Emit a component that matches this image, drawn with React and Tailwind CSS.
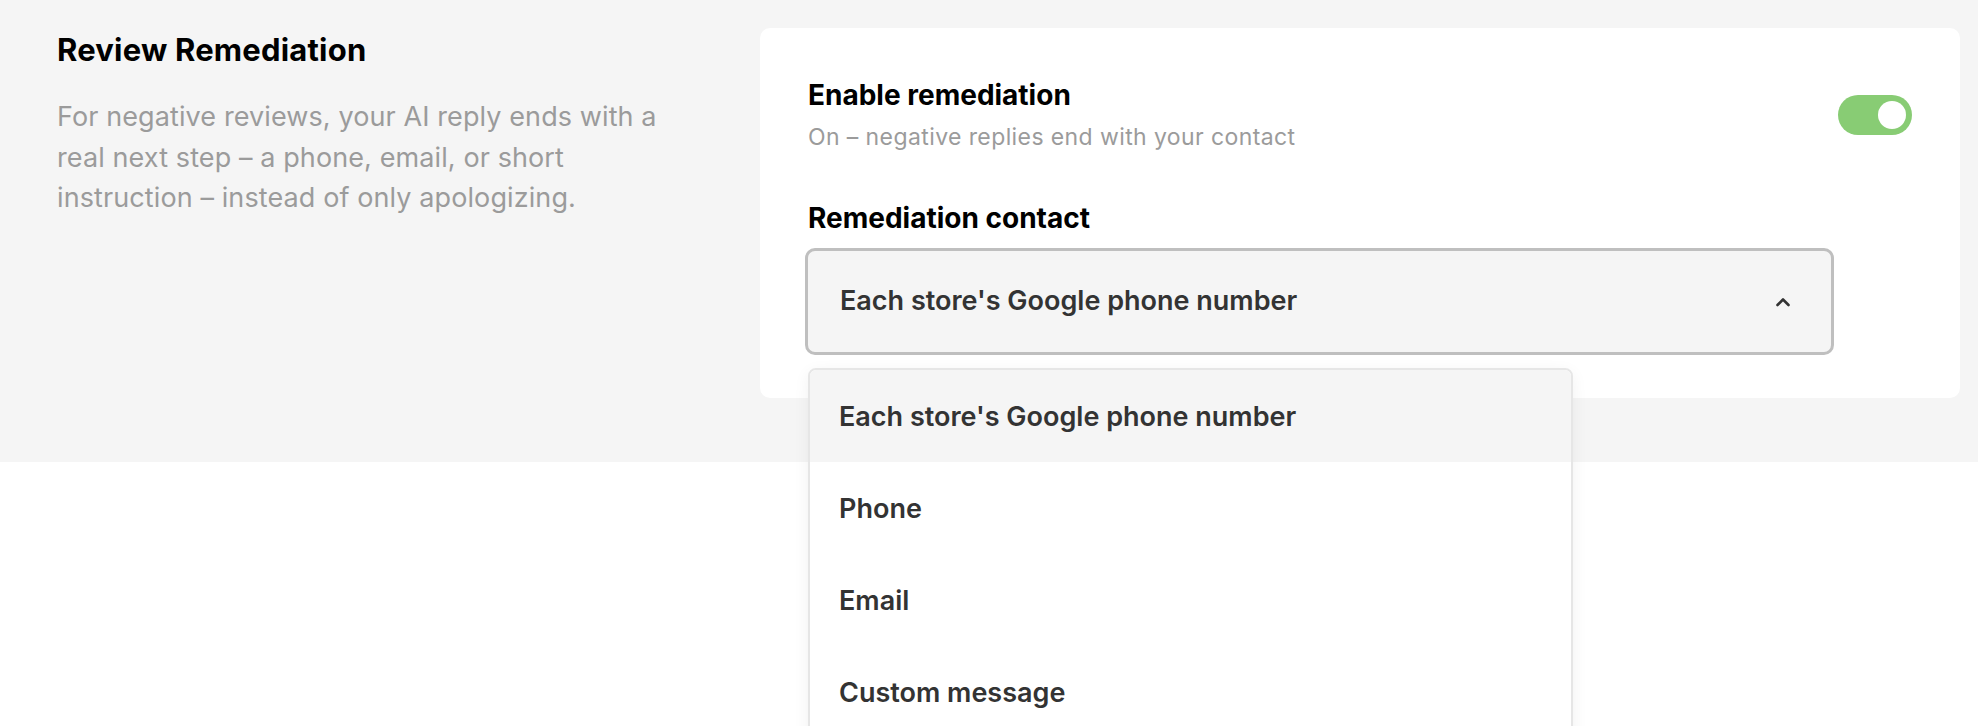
import { useState } from 'react';

const options = ["Each store's Google phone number", 'Phone', 'Email', 'Custom message'];

function Toggle({ on, onChange }) {
  return (
    <button
      type="button"
      onClick={() => onChange(!on)}
      className={`flex h-[40px] w-[74px] shrink-0 items-center rounded-full px-[6px] ${
        on ? 'justify-end bg-[#88cc74]' : 'justify-start bg-[#d4d4d4]'
      }`}
    >
      <span className="block h-[28px] w-[28px] rounded-full bg-white" />
    </button>
  );
}

function ChevronUp() {
  return (
    <svg width="16" height="10" viewBox="0 0 16 10" fill="none">
      <path d="M2.5 8L8 2.5L13.5 8" stroke="#333" strokeWidth="2.6" strokeLinecap="round" strokeLinejoin="round" />
    </svg>
  );
}

export default function App() {
  const [enabled, setEnabled] = useState(true);
  const [value, setValue] = useState(options[0]);
  const [open, setOpen] = useState(true);

  return (
    <div className="min-h-screen bg-white font-['Inter',sans-serif]">
      <section className="flex bg-[#f5f5f5] pb-[64px] pl-[57px] pr-[18px] pt-[28px]">
        <div className="w-[703px] shrink-0 pr-[83px]">
          <h2 className="text-[31px] font-bold leading-[44px] tracking-[0.2px] text-black">Review Remediation</h2>
          <p className="mt-[25px] text-[27px] leading-[40.5px] tracking-[0.1px] text-[#9b9b9b]">
            For negative reviews, your AI reply ends with a real next step – a phone, email, or short
            instruction – instead of only apologizing.
          </p>
        </div>

        <div className="flex-1 rounded-[10px] bg-white pb-[43px] pl-[48px] pr-[48px] pt-[49px]">
          <div className="flex items-center justify-between">
            <div>
              <div className="text-[28px] font-bold leading-[36px] text-black">Enable remediation</div>
              <div className="mt-[9px] text-[23px] leading-[30px] tracking-[0.4px] text-[#9b9b9b]">
                On – negative replies end with your contact
              </div>
            </div>
            <Toggle on={enabled} onChange={setEnabled} />
          </div>

          <div className="mt-[48px] text-[28px] font-bold leading-[36px] text-black">Remediation contact</div>

          <div className="relative mt-[12px] w-[1029px] -ml-[3px]">
            <button
              type="button"
              onClick={() => setOpen((o) => !o)}
              className="flex h-[107px] w-full items-center justify-between rounded-[10px] border-[3px] border-[#bfbfbf] bg-[#f5f5f5] pl-[32px] pr-[40px] text-left"
            >
              <span className="text-[27px] font-semibold text-[#333]">{value}</span>
              <ChevronUp />
            </button>

            {open && (
              <div className="absolute left-[3px] top-[120px] z-10 w-[765px] overflow-hidden rounded-t-[8px] border-2 border-[#e6e6e6] bg-white shadow-[0_4px_16px_rgba(0,0,0,0.06)]">
                {options.map((opt) => (
                  <button
                    key={opt}
                    type="button"
                    onClick={() => {
                      setValue(opt);
                      setOpen(false);
                    }}
                    className={`block h-[92px] w-full pl-[29px] pt-[3px] text-left text-[27px] font-semibold text-[#333] ${
                      opt === value ? 'bg-[#f5f5f5]' : 'bg-white'
                    }`}
                  >
                    {opt}
                  </button>
                ))}
              </div>
            )}
          </div>
        </div>
      </section>
    </div>
  );
}
